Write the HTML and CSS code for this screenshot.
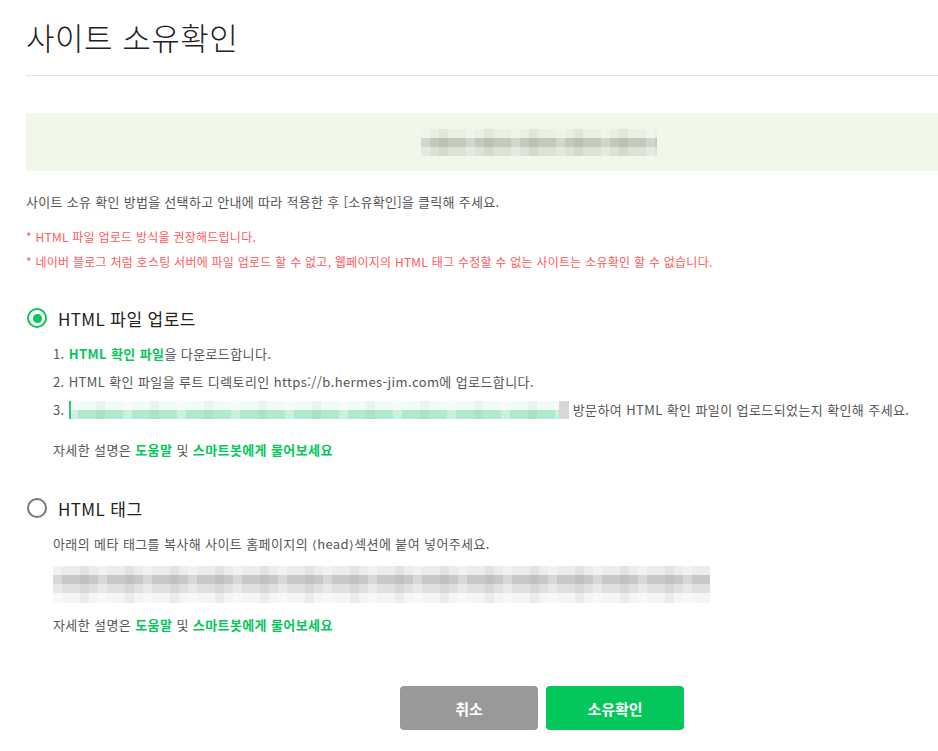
FILE: index.html
```html
<!DOCTYPE html>
<html lang="ko">
<head>
  <meta charset="UTF-8" />
  <meta name="viewport" content="width=device-width, initial-scale=1.0"/>
  <title>사이트 소유확인</title>

  <link rel="stylesheet" href="styles.css">
</head>

<body>
  <div class="page">
    <div class="page-head">
      <h1>사이트 소유확인</h1>
    </div>

    <div class="site-box">
      <span class="mosaic mosaic-site"></span>
    </div>

    <p class="guide">사이트 소유 확인 방법을 선택하고 안내에 따라 적용한 후 [소유확인]을 클릭해 주세요.</p>
    <p class="warn">* HTML 파일 업로드 방식을 권장해드립니다.</p>
    <p class="warn">* 네이버 블로그 처럼 호스팅 서버에 파일 업로드 할 수 없고, 웹페이지의 HTML 태그 수정할 수 없는 사이트는 소유확인 할 수 없습니다.</p>

    <div class="method">
      <label class="radio-row">
        <span class="radio checked"></span>
        <span class="radio-label">HTML 파일 업로드</span>
      </label>
      <ol class="steps">
        <li>1. <a href="#" class="link">HTML 확인 파일</a>을 다운로드합니다.</li>
        <li>2. HTML 확인 파일을 루트 디렉토리인 https://b.hermes-jim.com에 업로드합니다.</li>
        <li>3. <span class="mosaic mosaic-url"></span> 방문하여 HTML 확인 파일이 업로드되었는지 확인해 주세요.</li>
      </ol>
      <p class="help">자세한 설명은 <a href="#" class="link">도움말</a> 및 <a href="#" class="link">스마트봇에게 물어보세요</a></p>
    </div>

    <div class="method">
      <label class="radio-row">
        <span class="radio"></span>
        <span class="radio-label">HTML 태그</span>
      </label>
      <p class="tag-desc">아래의 메타 태그를 복사해 사이트 홈페이지의 <span class="bracket">⟨</span>head<span class="bracket">⟩</span>섹션에 붙여 넣어주세요.</p>
      <div class="mosaic mosaic-tag"></div>
      <p class="help">자세한 설명은 <a href="#" class="link">도움말</a> 및 <a href="#" class="link">스마트봇에게 물어보세요</a></p>
    </div>

    <div class="actions">
      <button class="btn btn-cancel">취소</button>
      <button class="btn btn-ok">소유확인</button>
    </div>
  </div>
</body>
</html>
```

FILE: styles.css
```css
html {
  overflow: hidden;
}

body {
  margin: 0;
  background: #fff;
  font-family: "Noto Sans CJK KR", "Noto Sans", sans-serif;
  color: #555;
}

.page {
  width: 1032px;
  margin-left: 26px;
}

.page-head {
  border-bottom: 1px solid #e3e3e3;
  height: 76px;
  box-sizing: border-box;
}

h1 {
  margin: 0;
  padding-top: 15px;
  font-size: 31px;
  line-height: 44px;
  font-weight: 300;
  letter-spacing: 0.5px;
  color: #222;
}

.site-box {
  margin-top: 37px;
  height: 58px;
  background: #f1f7e9;
  display: flex;
  align-items: center;
  justify-content: center;
}

p {
  margin: 0;
}

.guide {
  margin-top: 21px;
  font-size: 13px;
  line-height: 20px;
  color: #555;
  letter-spacing: 0.3px;
}

.warn {
  font-size: 12px;
  line-height: 25px;
  color: #ff5a5a;
  letter-spacing: 0.25px;
}

.guide + .warn {
  margin-top: 12px;
}

.method {
  margin-top: 32px;
}

.method + .method {
  margin-top: 32px;
}

.radio-row {
  display: flex;
  align-items: center;
  gap: 11px;
  height: 24px;
  margin-left: 1px;
}

.radio {
  width: 20px;
  height: 20px;
  box-sizing: border-box;
  border: 2px solid #777;
  border-radius: 50%;
  position: relative;
}

.radio.checked {
  border: 2.5px solid #03c75a;
}

.radio.checked::after {
  content: "";
  position: absolute;
  left: 50%;
  top: 50%;
  width: 9px;
  height: 9px;
  margin: -4.5px 0 0 -4.5px;
  border-radius: 50%;
  background: #03c75a;
}

.radio-label {
  font-size: 17px;
  color: #222;
  letter-spacing: 0.4px;
}

.steps {
  list-style: none;
  margin: 10px 0 0;
  padding-left: 27px;
  font-size: 13px;
  line-height: 28px;
  letter-spacing: 0.4px;
}

.link {
  color: #03c75a;
  font-weight: 700;
  text-decoration: none;
}

.help {
  margin-top: 12px;
  padding-left: 27px;
  font-size: 13px;
  line-height: 28px;
  letter-spacing: 0.4px;
}

.mosaic-tag + .help {
  margin-top: 8px;
}

.tag-desc {
  margin-top: 10px;
  padding-left: 27px;
  font-size: 13px;
  line-height: 28px;
  letter-spacing: 0.4px;
}

.bracket {
  font-family: "DejaVu Sans", sans-serif;
  font-size: 12px;
}

/* blurred (redacted) content */
.mosaic {
  display: inline-block;
}

.mosaic-site {
  width: 236px;
  height: 27px;
  margin-left: -6px;
  background:
    repeating-linear-gradient(90deg, rgba(255,255,255,0.25) 0 9px, transparent 9px 18px, rgba(0,0,0,0.04) 18px 27px, transparent 27px 45px),
    linear-gradient(#eaf1e2 0 9px, #c3cabc 9px 18px, #dce3d5 18px 27px);
}

.mosaic-url {
  width: 500px;
  height: 18px;
  vertical-align: -4px;
  background:
    linear-gradient(90deg, #2ecb76 0 2px, transparent 2px 490px, #d8d8d8 490px),
    repeating-linear-gradient(90deg, rgba(255,255,255,0.35) 0 9px, transparent 9px 27px, rgba(0,0,0,0.03) 27px 36px, transparent 36px 54px),
    linear-gradient(#f2fbf6 0 9px, #aeeacb 9px 18px);
}

.mosaic-tag {
  display: block;
  margin: 7px 0 0 27px;
  width: 657px;
  height: 37px;
  background:
    repeating-linear-gradient(90deg, rgba(255,255,255,0.3) 0 9px, transparent 9px 27px, rgba(0,0,0,0.04) 27px 36px, transparent 36px 45px),
    linear-gradient(#ececec 0 9px, #c8c8c8 9px 18px, #e0e0e0 18px 27px, #f5f5f5 27px);
}

.actions {
  margin-top: 47px;
  display: flex;
  justify-content: center;
  gap: 8px;
}

.btn {
  width: 138px;
  height: 44px;
  border: none;
  border-radius: 4px;
  color: #fff;
  font-family: inherit;
  font-size: 15px;
  font-weight: 700;
  cursor: pointer;
}

.btn-cancel {
  background: #999;
}

.btn-ok {
  background: #03c75a;
}
```
